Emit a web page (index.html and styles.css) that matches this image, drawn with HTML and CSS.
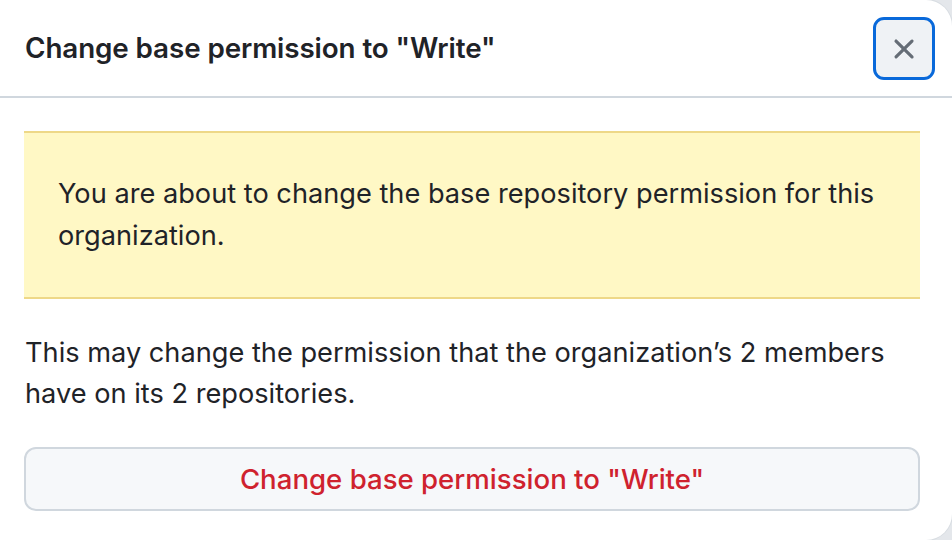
FILE: index.html
```html
<!DOCTYPE html>
<html lang="en">
<head>
<meta charset="utf-8">
<title>Change base permission</title>
<link rel="stylesheet" href="styles.css">
</head>
<body>
<div class="dialog">
  <header class="dialog-header">
    <h1 class="dialog-title">Change base permission to "Write"</h1>
    <button class="close-btn" aria-label="Close">
      <svg width="34" height="34" viewBox="0 0 16 16" aria-hidden="true"><path d="M3.72 3.72a.75.75 0 0 1 1.06 0L8 6.94l3.22-3.22a.749.749 0 0 1 1.275.326.749.749 0 0 1-.215.734L9.06 8l3.22 3.22a.749.749 0 0 1-.326 1.275.749.749 0 0 1-.734-.215L8 9.06l-3.22 3.22a.751.751 0 0 1-1.042-.018.751.751 0 0 1-.018-1.042L6.94 8 3.72 4.78a.75.75 0 0 1 0-1.06Z" fill="currentColor"/></svg>
    </button>
  </header>
  <div class="dialog-body">
    <div class="flash">You are about to change the base repository permission for this organization.</div>
    <p class="note">This may change the permission that the organization’s 2 members have on its 2 repositories.</p>
    <button class="danger-btn">Change base permission to "Write"</button>
  </div>
</div>
</body>
</html>
```

FILE: styles.css
```css
* { box-sizing: border-box; }
html, body { margin: 0; height: 100%; }
body {
  background: #e4e7eb;
  font-family: Inter, "Noto Sans", "Liberation Sans", sans-serif;
  color: #1f2328;
}
.dialog {
  width: 952px;
  height: 540px;
  background: #fff;
  border-radius: 0 26px 26px 0;
  box-shadow: 0 0 0 1px #d8dde2;
  overflow: hidden;
  display: flex;
  flex-direction: column;
}
.dialog-header {
  height: 98px;
  flex: none;
  display: flex;
  align-items: center;
  justify-content: space-between;
  padding: 0 17px 0 25px;
  border-bottom: 2px solid #d0d7de;
}
.dialog-title {
  margin: 0;
  font-size: 27.8px;
  font-weight: 600;
  letter-spacing: -0.1px;
}
.close-btn {
  width: 62px;
  height: 63px;
  margin-top: 1px;
  border: 3px solid #0969da;
  border-radius: 11px;
  background: #eff2f5;
  color: #656d76;
  display: flex;
  align-items: center;
  justify-content: center;
  padding: 0;
}
.dialog-body {
  padding: 33px 32px 0 24px;
  display: flex;
  flex-direction: column;
}
.flash {
  background: #fff8c5;
  border-top: 2px solid #eed888;
  border-bottom: 2px solid #eed888;
  padding: 40px 34px;
  font-size: 27.2px;
  line-height: 42px;
}
.note {
  margin: 33px 0 33px 1px;
  font-size: 27.2px;
  line-height: 41px;
}
.danger-btn {
  height: 64px;
  width: 100%;
  border: 2px solid #d0d7de;
  border-radius: 12px;
  background: #f6f8fa;
  color: #cf222e;
  font-family: inherit;
  font-size: 27.6px;
  font-weight: 500;
}
```
